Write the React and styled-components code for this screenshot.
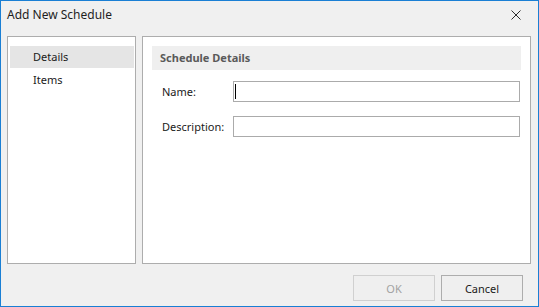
import React from "react";
import styled, { createGlobalStyle } from "styled-components";

const Global = createGlobalStyle`
  html, body {
    margin: 0;
    padding: 0;
    background: #f0f0f0;
  }
  * {
    box-sizing: border-box;
  }
`;

const Window = styled.div`
  width: 539px;
  height: 307px;
  display: flex;
  flex-direction: column;
  background: #f0f0f0;
  border: 1px solid #1a7fd4;
  font-family: "Noto Sans", "Open Sans", sans-serif;
  font-size: 11px;
  color: #1a1a1a;
`;

const TitleBar = styled.div`
  height: 35px;
  display: flex;
  align-items: flex-start;
  justify-content: space-between;
  padding: 5px 17px 0 6px;
`;

const Title = styled.span`
  font-size: 12px;
  line-height: 18px;
  color: #1e1e1e;
`;

const CloseButton = styled.button`
  width: 10px;
  height: 10px;
  margin-top: 4px;
  padding: 0;
  border: none;
  background: none;
  display: flex;
  cursor: pointer;
`;

const Body = styled.div`
  display: flex;
  gap: 6px;
  padding: 0 7px 0 6px;
  height: 228px;
`;

const NavPanel = styled.div`
  width: 129px;
  background: #fff;
  border: 1px solid #adadad;
  padding: 9px 1px 0 2px;
  display: flex;
  flex-direction: column;
  gap: 1px;
`;

const NavItem = styled.div`
  height: 22px;
  line-height: 22px;
  padding-left: 23px;
  background: ${(p) => (p.$active ? "#e5e5e5" : "transparent")};
  cursor: default;
`;

const ContentPanel = styled.div`
  flex: 1;
  background: #fff;
  border: 1px solid #adadad;
  padding: 9px 9px 0 9px;
`;

const SectionHeader = styled.div`
  height: 24px;
  line-height: 23px;
  padding-left: 8px;
  background: #efefef;
  color: #5a5a5a;
  font-weight: bold;
`;

const Form = styled.div`
  display: grid;
  grid-template-columns: 71px 1fr;
  row-gap: 14px;
  align-items: center;
  margin-top: 11px;
  padding: 0 1px 0 10px;
`;

const Label = styled.label`
  color: #1a1a1a;
`;

const Field = styled.div`
  position: relative;
  display: flex;
`;

const Input = styled.input`
  flex: 1;
  min-width: 0;
  height: 21px;
  border: 1px solid #ababab;
  outline: none;
  padding: 0 2px;
  font: inherit;
`;

const Caret = styled.span`
  position: absolute;
  left: 2px;
  top: 3px;
  width: 1px;
  height: 15px;
  background: #000;
`;

const Footer = styled.div`
  flex: 1;
  display: flex;
  justify-content: flex-end;
  align-items: flex-start;
  gap: 6px;
  padding: 11px 15px 0 0;
`;

const Button = styled.button`
  width: 82px;
  height: 26px;
  font-family: inherit;
  font-size: 11px;
  background: #efefef;
  border: 1px solid ${(p) => (p.disabled ? "#d0d0d0" : "#adadad")};
  color: ${(p) => (p.disabled ? "#a2a2a2" : "#1a1a1a")};
  cursor: ${(p) => (p.disabled ? "default" : "pointer")};
`;

const CloseIcon = () => (
  <svg width="10" height="10" viewBox="0 0 10 10">
    <path d="M0.5 0.5 L9.5 9.5 M9.5 0.5 L0.5 9.5" stroke="#2b2b2b" strokeWidth="1" fill="none" />
  </svg>
);

export default function App() {
  return (
    <>
      <Global />
      <Window>
        <TitleBar>
          <Title>Add New Schedule</Title>
          <CloseButton aria-label="Close">
            <CloseIcon />
          </CloseButton>
        </TitleBar>
        <Body>
          <NavPanel>
            <NavItem $active>Details</NavItem>
            <NavItem>Items</NavItem>
          </NavPanel>
          <ContentPanel>
            <SectionHeader>Schedule Details</SectionHeader>
            <Form>
              <Label>Name:</Label>
              <Field>
                <Input />
                <Caret />
              </Field>
              <Label>Description:</Label>
              <Field>
                <Input />
              </Field>
            </Form>
          </ContentPanel>
        </Body>
        <Footer>
          <Button disabled>OK</Button>
          <Button>Cancel</Button>
        </Footer>
      </Window>
    </>
  );
}
